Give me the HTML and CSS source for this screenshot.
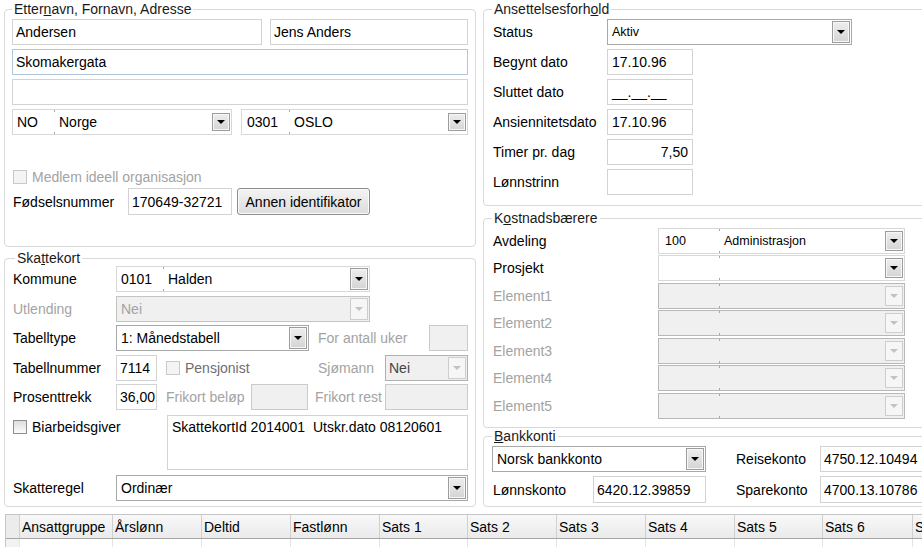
FILE: index.html
```html
<!DOCTYPE html>
<html lang="no">
<head>
<meta charset="utf-8">
<title>Ansatt</title>
<link rel="stylesheet" href="styles.css">
</head>
<body>
<div class="page">
  <div class="top">
    <div class="col col-left">
      <fieldset class="grp g-name">
        <legend>Etter<u>n</u>avn, Fornavn, Adresse</legend>
        <div class="stack s4">
          <div class="row">
            <div class="inp w250">Andersen</div>
            <div class="inp w198 ml8">Jens Anders</div>
          </div>
          <div class="row"><div class="inp full focus">Skomakergata</div></div>
          <div class="row"><div class="inp full"></div></div>
          <div class="row">
            <div class="combo w220">
              <span class="code cw41">NO</span><span class="sep"></span><span class="val">Norge</span><span class="btn short"></span>
            </div>
            <div class="combo w227 ml9">
              <span class="code cw47 pl5">0301</span><span class="sep"></span><span class="val">OSLO</span><span class="btn short"></span>
            </div>
          </div>
        </div>
        <div class="chkrow dis mt34"><span class="chk dis"></span><span>Medlem ideell organisasjon</span></div>
        <div class="row r27 mt3">
          <span class="lbl wl116">Fødselsnummer</span>
          <div class="inp w104 h27">170649-32721</div>
          <button class="std-btn" type="button">Annen identifikator</button>
        </div>
      </fieldset>

      <fieldset class="grp g-skatt">
        <legend>Ska<u>t</u>tekort</legend>
        <div class="stack s35">
          <div class="row">
            <span class="lbl ls">Kommune</span>
            <div class="combo w254">
              <span class="code cw46">0101</span><span class="sep"></span><span class="val">Halden</span><span class="btn tall"></span>
            </div>
          </div>
          <div class="row">
            <span class="lbl ls dis">Utlending</span>
            <div class="combo w254 disabled">
              <span class="val">Nei</span><span class="btn tall"></span>
            </div>
          </div>
          <div class="row">
            <span class="lbl ls">Tabelltype</span>
            <div class="combo w193 dark">
              <span class="val">1: Månedstabell</span><span class="btn tall"></span>
            </div>
            <span class="lbl dis ml8 wl112">For antall uker</span>
            <div class="inp w39 disabled"></div>
          </div>
          <div class="row">
            <span class="lbl ls">Tabellnummer</span>
            <div class="inp w41">7114</div>
            <div class="pens"><span class="chk dis"></span><span class="pens-text">Pensjonist</span></div>
            <span class="lbl dis wl68">Sjømann</span>
            <div class="combo w83 disabled dark-dis">
              <span class="val dark-text pl3">Nei</span><span class="btn tall"></span>
            </div>
          </div>
          <div class="row">
            <span class="lbl ls">Prosenttrekk</span>
            <div class="inp w41">36,00</div>
            <span class="lbl dis ml8 wl86">Frikort beløp</span>
            <div class="inp w57 disabled"></div>
            <span class="lbl dis ml6 wl71">Frikort rest</span>
            <div class="inp w83 disabled"></div>
          </div>
        </div>
        <div class="memo-row mt5">
          <div class="memo-left">
            <div class="chkrow"><span class="chk"></span><span>Biarbeidsgiver</span></div>
          </div>
          <div class="memo">SkattekortId 2014001  Utskr.dato 08120601</div>
        </div>
        <div class="row mt5">
          <span class="lbl ls">Skatteregel</span>
          <div class="combo w352 dark">
            <span class="val">Ordinær</span><span class="btn tall"></span>
          </div>
        </div>
      </fieldset>
    </div>

    <div class="col col-right">
      <fieldset class="grp g-ans">
        <legend>Ansettelsesforh<u>o</u>ld</legend>
        <div class="stack s4">
          <div class="row">
            <span class="lbl la">Status</span>
            <div class="combo w245 dark">
              <span class="val sm">Aktiv</span><span class="btn tall"></span>
            </div>
          </div>
          <div class="row"><span class="lbl la">Begynt dato</span><div class="inp w86 date">17.10.96</div></div>
          <div class="row"><span class="lbl la">Sluttet dato</span><div class="inp w86 date">__.__.__</div></div>
          <div class="row"><span class="lbl la">Ansiennitetsdato</span><div class="inp w86 date">17.10.96</div></div>
          <div class="row"><span class="lbl la">Timer pr. dag</span><div class="inp w86 num">7,50</div></div>
          <div class="row"><span class="lbl la">Lønnstrinn</span><div class="inp w86"></div></div>
        </div>
      </fieldset>

      <fieldset class="grp g-kost">
        <legend>K<u>o</u>stnadsbærere</legend>
        <div class="stack s25">
          <div class="row r25">
            <span class="lbl lk">Avdeling</span>
            <div class="combo w247 h25">
              <span class="code cw60 pl6 sm">100</span><span class="sep"></span><span class="val sm">Administrasjon</span><span class="btn"></span>
            </div>
          </div>
          <div class="row r25">
            <span class="lbl lk">Prosjekt</span>
            <div class="combo w247 h25">
              <span class="code cw60"></span><span class="sep"></span><span class="val"></span><span class="btn"></span>
            </div>
          </div>
          <div class="row r25">
            <span class="lbl lk dis">Element1</span>
            <div class="combo w247 h25 disabled el"><span class="code cw60"></span><span class="sep"></span><span class="val"></span><span class="btn"></span></div>
          </div>
          <div class="row r25">
            <span class="lbl lk dis">Element2</span>
            <div class="combo w247 h25 disabled el"><span class="code cw60"></span><span class="sep"></span><span class="val"></span><span class="btn"></span></div>
          </div>
          <div class="row r25">
            <span class="lbl lk dis">Element3</span>
            <div class="combo w247 h25 disabled el"><span class="code cw60"></span><span class="sep"></span><span class="val"></span><span class="btn"></span></div>
          </div>
          <div class="row r25">
            <span class="lbl lk dis">Element4</span>
            <div class="combo w247 h25 disabled el"><span class="code cw60"></span><span class="sep"></span><span class="val"></span><span class="btn"></span></div>
          </div>
          <div class="row r25">
            <span class="lbl lk dis">Element5</span>
            <div class="combo w247 h25 disabled el"><span class="code cw60"></span><span class="sep"></span><span class="val"></span><span class="btn"></span></div>
          </div>
        </div>
      </fieldset>

      <fieldset class="grp g-bank">
        <legend><u>B</u>ankkonti</legend>
        <div class="stack s4">
          <div class="row">
            <div class="combo w214 dark">
              <span class="val">Norsk bankkonto</span><span class="btn tall"></span>
            </div>
            <span class="lbl ml29 wl85">Reisekonto</span>
            <div class="inp w120">4750.12.10494</div>
          </div>
          <div class="row r27">
            <span class="lbl wl101">Lønnskonto</span>
            <div class="inp w113 h27">6420.12.39859</div>
            <span class="lbl ml29 wl85">Sparekonto</span>
            <div class="inp w120 h27">4700.13.10786</div>
          </div>
        </div>
      </fieldset>
    </div>
  </div>

  <div class="grid">
    <div class="grow ghead">
      <div class="gc sel"></div>
      <div class="gc first">Ansattgruppe</div>
      <div class="gc">Årslønn</div>
      <div class="gc">Deltid</div>
      <div class="gc">Fastlønn</div>
      <div class="gc w88">Sats 1</div>
      <div class="gc">Sats 2</div>
      <div class="gc">Sats 3</div>
      <div class="gc">Sats 4</div>
      <div class="gc w88">Sats 5</div>
      <div class="gc w90">Sats 6</div>
      <div class="gc">Sats 7</div>
    </div>
    <div class="grow gbody">
      <div class="gc sel"></div>
      <div class="gc first"></div>
      <div class="gc"></div>
      <div class="gc"></div>
      <div class="gc"></div>
      <div class="gc w88"></div>
      <div class="gc"></div>
      <div class="gc"></div>
      <div class="gc"></div>
      <div class="gc w88"></div>
      <div class="gc w90"></div>
      <div class="gc"></div>
    </div>
  </div>
</div>
</body>
</html>
```

FILE: styles.css
```css
* { box-sizing: border-box; }
html, body { margin: 0; padding: 0; background: #fff; }
body {
  font-family: "Liberation Sans", Arial, sans-serif;
  font-size: 14px;
  color: #000;
  width: 922px;
  height: 547px;
  overflow: hidden;
}
.page { padding: 1px 0 0 4px; }
.top { display: flex; align-items: flex-start; gap: 7px; }
.col { display: flex; flex-direction: column; flex: none; }
.col-left { width: 472px; }
.col-right { width: 470px; }

/* group boxes */
.grp {
  margin: 0;
  min-width: 0;
  border: 1px solid #d9d9d9;
  border-radius: 4px;
  padding: 2px 7px 0 7px;
}
.grp legend {
  padding: 0 2px;
  line-height: 16px;
  font-size: 14px;
  color: #1a1a1a;
}
.g-name { height: 246px; }
.g-skatt { height: 257px; margin-top: 3px; padding-top: 0; }
.g-skatt legend { margin-left: 3px; }
.col-right .grp { padding-left: 8px; padding-right: 0; }
.g-ans { height: 205px; }
.g-kost { height: 218px; margin-top: 4px; }
.g-bank { height: 79px; }

/* layout helpers */
.stack { display: flex; flex-direction: column; }
.s4 { gap: 4px; }
.s35 { gap: 3.5px; }
.s25 { gap: 2.5px; }
.row { display: flex; align-items: center; height: 26px; }
.r25 { height: 25px; }
.r27 { height: 27px; }
.mt3 { margin-top: 3px; }
.mt5 { margin-top: 5px; }
.mt34 { margin-top: 34px; }
.ml6 { margin-left: 6px; }
.ml8 { margin-left: 8px; }
.ml9 { margin-left: 9px; }
.ml29 { margin-left: 29px; }

/* labels */
.lbl { flex: none; padding-left: 1px; white-space: nowrap; }
.lbl.dis, .chkrow.dis { color: #a3a3a3; }
.ls { width: 104px; }
.la { width: 115px; }
.lk { width: 166px; }
.wl68 { width: 68px; }
.wl71 { width: 71px; }
.wl85 { width: 85px; }
.wl86 { width: 86px; }
.wl101 { width: 101px; }
.wl112 { width: 112px; }
.wl116 { width: 116px; }

/* text inputs */
.inp {
  flex: none;
  height: 26px;
  border: 1px solid #d3d3d3;
  background: #fff;
  padding: 0 3px;
  display: flex;
  align-items: center;
  white-space: nowrap;
  overflow: hidden;
}
.inp.full { width: 100%; }
.inp.focus { border-color: #b3c7dc; }
.inp.disabled { background: #f0f0f0; border-color: #cbcbcb; }
.inp.date { padding-left: 4px; }
.inp.num { justify-content: flex-end; padding-right: 4px; }
.h25 { height: 25px; }
.h27 { height: 27px; }
.w39 { width: 39px; }
.w41 { width: 41px; }
.w57 { width: 57px; }
.w83 { width: 83px; }
.w86 { width: 86px; }
.w104 { width: 104px; }
.w113 { width: 113px; }
.w120 { width: 120px; }
.w193 { width: 193px; }
.w198 { width: 198px; }
.w214 { width: 214px; }
.w220 { width: 220px; }
.w227 { width: 227px; }
.w245 { width: 245px; }
.w247 { width: 247px; }
.w250 { width: 250px; }
.w254 { width: 254px; }
.w352 { width: 352px; }

/* combo boxes */
.combo {
  flex: none;
  height: 26px;
  border: 1px solid #d8d8d8;
  background: #fff;
  display: flex;
  align-items: stretch;
}
.combo.dark { border-color: #a8a8a8; }
.combo.disabled { background: #f0f0f0; border-color: #c4c4c4; color: #a3a3a3; }
.combo.el { border-color: #b8b8b8; }
.combo.dark-dis { border-color: #b0b0b0; }
.combo .code, .combo .val {
  display: flex;
  align-items: center;
  padding-left: 4px;
  white-space: nowrap;
  overflow: hidden;
}
.combo .code { flex: none; }
.combo .val { flex: 1; }
.combo .pl3 { padding-left: 3px; }
.combo .pl5 { padding-left: 5px; }
.combo .pl6 { padding-left: 6px; }
.cw41 { width: 41px; }
.cw46 { width: 46px; }
.cw47 { width: 47px; }
.cw60 { width: 60px; }
.sm { font-size: 12.5px; }
.dark-text { color: #444; }
.combo .sep {
  flex: none;
  width: 1px;
  background: linear-gradient(#a8a8a8 0 2px, transparent 2px calc(100% - 2px), #a8a8a8 calc(100% - 2px));
}
.combo .btn {
  flex: none;
  width: 18px;
  margin: 2px 1px 2px 0;
  border: 1px solid #9c9c9c;
  box-shadow: inset 0 0 0 1px #f7f7f7;
  background: linear-gradient(#eeeeee, #d4d4d4);
  display: flex;
  align-items: center;
  justify-content: center;
}
.combo .btn.tall { margin-top: 1px; margin-bottom: 1px; }
.combo .btn.short { margin-top: 3px; margin-bottom: 3px; }
.combo .btn::after {
  content: "";
  width: 0;
  height: 0;
  border-left: 4px solid transparent;
  border-right: 4px solid transparent;
  border-top: 4px solid #000;
}
.combo.disabled .btn {
  border-color: #cdcdcd;
  box-shadow: none;
  background: #f6f6f6;
}
.combo.disabled .btn::after { border-top-color: #c2c2c2; }

/* checkboxes */
.chkrow { display: flex; align-items: center; gap: 5px; height: 16px; padding-left: 1px; }
.chk {
  flex: none;
  width: 14px;
  height: 14px;
  border: 1px solid #8e8e8e;
  background: linear-gradient(#dedede, #fbfbfb);
}
.chk.dis { border-color: #c9c9c9; background: #f4f4f4; }
.pens { flex: none; display: flex; align-items: center; gap: 5px; width: 151px; margin-left: 9px; }
.pens-text { color: #6e6e6e; }

/* push button */
.std-btn {
  flex: none;
  margin-left: 5px;
  width: 133px;
  height: 27px;
  padding: 0;
  font-family: inherit;
  font-size: 14px;
  color: #000;
  border: 1px solid #8c8c8c;
  border-radius: 3px;
  background: linear-gradient(#f4f4f4, #dcdcdc);
  box-shadow: inset 0 0 0 1px #fbfbfb;
}

/* memo */
.memo-row { display: flex; align-items: flex-start; }
.memo-left { width: 155px; flex: none; padding-top: 4px; }
.memo {
  width: 301px;
  height: 55px;
  border: 1px solid #d3d3d3;
  padding: 3px 4px;
  line-height: 16px;
  white-space: pre;
}

/* bottom grid */
.grid { margin: 7px 0 0 1px; width: 960px; border-left: 1px solid #c6c6c6; }
.grow { display: flex; }
.ghead {
  height: 25px;
  border-top: 1px solid #c6c6c6;
  border-bottom: 1px solid #a6a6a6;
  background: linear-gradient(#f8f8f8, #eaeaea);
}
.gc {
  flex: none;
  width: 89px;
  border-right: 1px solid #d0d0d0;
  padding-left: 2px;
  display: flex;
  align-items: center;
  white-space: nowrap;
  overflow: hidden;
}
.gc.sel { width: 14px; background: #ececec; }
.gc.first { width: 93px; }
.gc.w88 { width: 88px; }
.gc.w90 { width: 90px; }
.gbody { height: 20px; }
.gbody .gc { border-right-color: #e4e4e4; }
.gbody .gc.sel { background: #f2f2f2; }
```
